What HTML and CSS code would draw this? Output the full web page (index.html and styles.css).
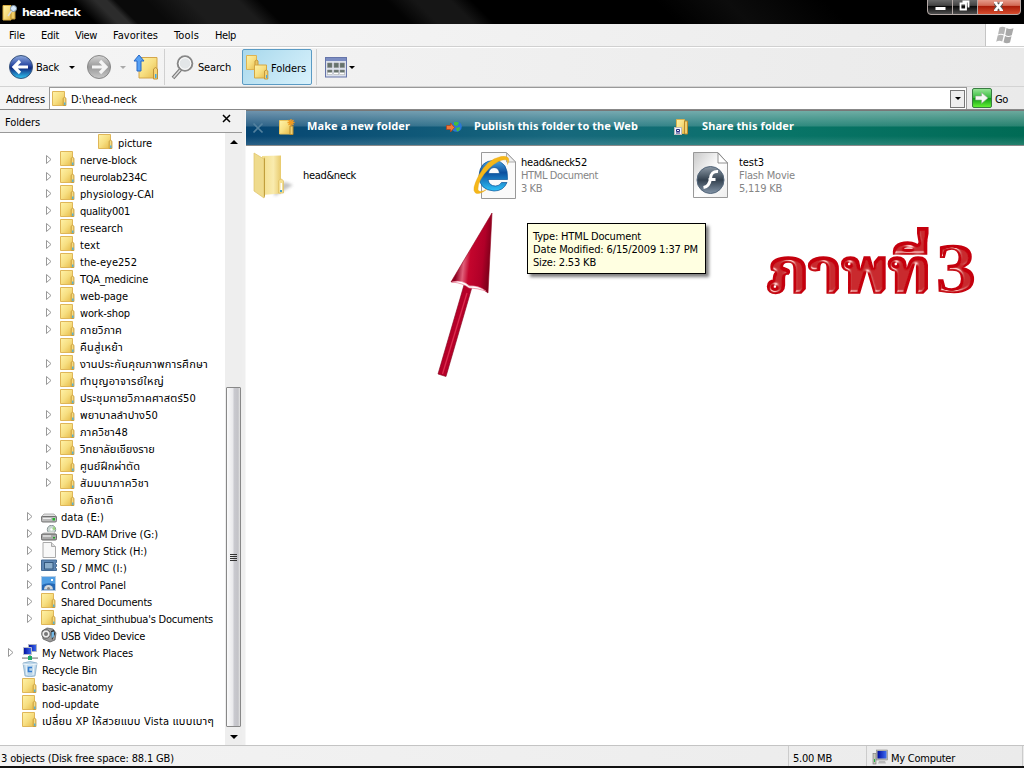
FILE: index.html
```html
<!DOCTYPE html>
<html lang="en">
<head>
<meta charset="utf-8">
<title>head-neck</title>
<link rel="stylesheet" href="styles.css">
</head>
<body>
<svg class="defs" aria-hidden="true">
  <defs>
    <linearGradient id="gFolder" x1="0" y1="0" x2="1" y2="1"><stop offset="0" stop-color="#fff3a8"/><stop offset=".5" stop-color="#f7df82"/><stop offset="1" stop-color="#e5b947"/></linearGradient>
    <linearGradient id="gBlue" x1="0" y1="0" x2="0" y2="1"><stop offset="0" stop-color="#8fabe0"/><stop offset=".45" stop-color="#24439f"/><stop offset=".55" stop-color="#102a80"/><stop offset="1" stop-color="#30c8f4"/></linearGradient>
    <linearGradient id="gGray" x1="0" y1="0" x2="0" y2="1"><stop offset="0" stop-color="#d5d5d5"/><stop offset=".5" stop-color="#999"/><stop offset="1" stop-color="#c9c9c9"/></linearGradient>
    <linearGradient id="gPage" x1="0" y1="0" x2="1" y2="1"><stop offset="0" stop-color="#c9c9c9"/><stop offset=".5" stop-color="#fff"/><stop offset="1" stop-color="#eee"/></linearGradient>
    <linearGradient id="gIe" x1="0" y1="0" x2="0" y2="1"><stop offset="0" stop-color="#4aa5e0"/><stop offset=".4" stop-color="#0c4f9e"/><stop offset="1" stop-color="#2fc4fa"/></linearGradient>
    <linearGradient id="gFlash" x1="0" y1="0" x2="0" y2="1"><stop offset="0" stop-color="#8d9aa6"/><stop offset=".5" stop-color="#33414f"/><stop offset="1" stop-color="#8395a8"/></linearGradient>
    <linearGradient id="gBig" x1="0" y1="0" x2="1" y2="0"><stop offset="0" stop-color="#f3de8c"/><stop offset=".6" stop-color="#f9ebae"/><stop offset="1" stop-color="#e8ca6c"/></linearGradient>
    <linearGradient id="gArrow" x1="0" y1=".3" x2="1" y2=".5"><stop offset=".2" stop-color="#8d0020"/><stop offset=".36" stop-color="#e0607a"/><stop offset=".5" stop-color="#c4052d"/><stop offset=".8" stop-color="#b00028"/><stop offset="1" stop-color="#760018"/></linearGradient>
    <linearGradient id="gScreen" x1="0" y1="0" x2="1" y2="0"><stop offset="0" stop-color="#000c9c"/><stop offset="1" stop-color="#3e6cf2"/></linearGradient>
  </defs>
  <symbol id="folder" viewBox="0 0 16 16"><path d="M.5.5h12v14H.5z" fill="url(#gFolder)" stroke="#dfb658"/><path d="M11.2 7.2q1.2-2 2.7 0v7.3h-2.7z" fill="#f5dc83" stroke="#c99d3b"/><path d="M12.2 11.500h1.2v2.500h-1.2z" fill="#35a8e5"/></symbol>
  <symbol id="drive" viewBox="0 0 16 16"><path d="M3 6h10l3 3H0z" fill="#e1e1e1" stroke="#999" stroke-width=".7"/><rect x=".4" y="8.5" width="15.2" height="5.5" rx="1.5" fill="#bbb" stroke="#666" stroke-width=".9"/><path d="M2 10.5h8" stroke="#eee"/><path d="M11.5 10h2.5v2.5h-2.5z" fill="#22b32b"/></symbol>
  <symbol id="dvd" viewBox="0 0 16 16"><circle cx="10.5" cy="4.5" r="4.2" fill="#c7d6d0" stroke="#8b9599"/><path d="M10.5 4.500l3-3.400 1 4z" fill="#9ad77d"/><circle cx="10.500" cy="4.500" r="1.200" fill="#fff"/><path d="M3 7h10l3 3H0z" fill="#ddd"/><rect x=".4" y="9" width="15.200" height="6" rx="1.300" fill="#aaa" stroke="#555" stroke-width=".9"/><path d="M2 11h8" stroke="#fff"/><path d="M12 12h2v1.500h-2z" fill="#22a32b"/></symbol>
  <symbol id="page" viewBox="0 0 16 16"><path d="M2 .5h8.500l4 4V15.500H2z" fill="#f8f8f8" stroke="#aaa"/><path d="M10.500.5v4h4" fill="#ddd" stroke="#aaa"/></symbol>
  <symbol id="card" viewBox="0 0 16 16"><path d="M.5 1h15v2.500h-1v2h1v2h-1v2h1v2H.5z" fill="#5d86b4" stroke="#456a94"/><rect x="3.500" y="3.500" width="8.500" height="6.500" fill="#8badcb" stroke="#34587f"/></symbol>
  <symbol id="panel" viewBox="0 0 16 16"><rect x=".5" y=".5" width="14" height="14" fill="#4f9ee4" stroke="#b4cbe4"/><path d="M1 9q5-3 13-1v6H1z" fill="#2568b5"/><path d="M3 13.500a4.500 4.500 0 0 1 9 0z" fill="#d5d9dc"/><circle cx="7.500" cy="12.500" r="1.500" fill="#888"/><path d="M10 3h2v2h-2z" fill="#fff"/></symbol>
  <symbol id="cam" viewBox="0 0 16 16"><path d="M1 4l5-3 6 1 3 4-1 7-5 2-7-3z" fill="#999" stroke="#555" stroke-width=".7"/><circle cx="5" cy="7" r="4.200" fill="#eee" stroke="#555"/><circle cx="5" cy="7" r="2" fill="#777"/><path d="M10 4l3-1 1 4-3 6z" fill="#222"/><path d="M10.500 5l2.500-.6v5l-2.500 2z" fill="#72b7e5"/></symbol>
  <symbol id="pc" viewBox="0 0 16 16"><rect x="1" y="4.500" width="3" height="10.500" fill="#c7c7b9" stroke="#777" stroke-width=".6"/><path d="M2 10h1v3H2z" fill="#2b4"/><rect x="4.500" y="1" width="11" height="10" fill="#bcbcb6" stroke="#777" stroke-width=".5"/><path d="M5.500 2h9v7.500h-9z" fill="url(#gScreen)"/><path d="M7 12h6l1 2.500H6z" fill="#bbb"/></symbol>
  <symbol id="net" viewBox="0 0 16 16"><path d="M6.500.5h8v7h-8z" fill="url(#gScreen)" stroke="#adb3be"/><path d="M1.500 3.500h8v7h-8z" fill="url(#gScreen)" stroke="#b9bfcc"/><path d="M8 11v2M0 14.200h16" stroke="#aaa" stroke-width="1.800"/><path d="M6 12h4v4H6z" fill="#20ac68"/></symbol>
  <symbol id="bin" viewBox="0 0 16 16"><path d="M1 2q7-3 14 0l-2 13q-5 1.500-10 0z" fill="#bdd7ea" stroke="#7da2c0" stroke-width=".7"/><path d="M1 3q7 2 14 0M4 4l1 10M12 4l-1 10" fill="none" stroke="#eef6fb"/><path d="M10 6.500H6.500v4H10" fill="none" stroke="#347cd0" stroke-width="1.600"/></symbol>
</svg>

<div class="window">
  <header class="titlebar">
    <svg class="title-icon" viewBox="0 0 17 17"><path d="M1 1.500h8V16H1z" fill="url(#gFolder)" stroke="#d8ac40"/><path d="M9 4.500h4V15H9z" fill="#eecb65" stroke="#bf9230"/><circle cx="11.500" cy="4.500" r="3" fill="#d6ebff" stroke="#8299ad"/><path d="M9.500 7L6 12" stroke="#ddd" stroke-width="1.500"/></svg>
    <span class="title" data-w="58">head-neck</span>
    <div class="controls">
      <svg width="96" height="16" viewBox="0 0 96 16">
        <defs><linearGradient id="gBtn" x1="0" y1="0" x2="0" y2="1"><stop offset="0" stop-color="#777"/><stop offset=".45" stop-color="#444"/><stop offset=".5" stop-color="#080808"/><stop offset="1" stop-color="#555"/></linearGradient><linearGradient id="gClose" x1="0" y1="0" x2="0" y2="1"><stop offset="0" stop-color="#ecac9d"/><stop offset=".45" stop-color="#d26a55"/><stop offset=".5" stop-color="#a91c08"/><stop offset="1" stop-color="#d95030"/></linearGradient></defs>
        <path d="M1.500-2V11q0 3.500 3.500 3.500H51V-2z" fill="url(#gBtn)"/><path d="M51-2V14.500H91q3.500 0 3.500-3.500V-2z" fill="url(#gClose)"/>
        <path d="M1.500-2V11q0 3.500 3.500 3.500H91q3.500 0 3.500-3.500V-2M26.500 0V14M51.500 0V14" fill="none" stroke="#b5aaa7"/>
        <rect x="9.500" y="7" width="10" height="3" fill="#fff"/>
        <path d="M36.500 1.500h6v6M34.500 3.500h5.500v6h-5.500z" fill="none" stroke="#fff" stroke-width="1.800"/>
        <path d="M69.500 3l6 7M75.500 3l-6 7" stroke="#555" stroke-width="4.500"/><path d="M69.500 3l6 7M75.500 3l-6 7" stroke="#fff" stroke-width="2.600"/><path d="M68 2.500h3.500M73.500 2.500H77M68 10.300h3.500M73.500 10.300H77" stroke="#fff" stroke-width="1.500"/>
      </svg>
    </div>
  </header>

  <nav class="menubar">
    <span data-w="16">File</span><span data-w="18">Edit</span><span data-w="22">View</span><span data-w="45">Favorites</span><span data-w="25">Tools</span><span data-w="21">Help</span>
    <div class="flag"><svg width="22" height="20" viewBox="0 0 22 20"><g fill="#b5b5b5"><path d="M4.500 2.500q3-1.600 6 0L9 9.500q-3-1.500-6 0zM2.700 10.500q3-1.500 6 0l-1.500 6q-3-1.500-6 .3z"/><path d="M11.500 3q3 1.800 7 .2l-1.700 7q-3.500 1.500-6.500-.2zM10 11q3 1.700 6.500.2l-1.500 6.300q-3.500 1.500-6.500-.2z" fill="#a8a8a8"/></g></svg></div>
  </nav>

  <div class="toolbar">
    <div class="tool back">
      <svg width="26" height="26" viewBox="0 0 26 26"><circle cx="13" cy="13" r="11.500" fill="url(#gBlue)" stroke="#39547c"/><path d="M12 7l-6 6 6 6M7 13h13" fill="none" stroke="#fff" stroke-width="3.200"/></svg>
      <span data-w="23">Back</span><i class="caret"></i>
    </div>
    <div class="tool fwd"><svg width="26" height="26" viewBox="0 0 26 26"><circle cx="13" cy="13" r="11.500" fill="url(#gGray)" stroke="#888"/><path d="M14 7l6 6-6 6M19 13H6" fill="none" stroke="#f5f5f5" stroke-width="3.200"/></svg><i class="caret dim"></i></div>
    <div class="tool up"><svg width="26" height="26" viewBox="0 0 26 26"><path d="M6 3.500h18V24H6z" fill="url(#gFolder)" stroke="#d4a64b"/><path d="M20.500 15q2-3 4 0v10h-4z" fill="#f5d477" stroke="#bd923a"/><path d="M22 20h1.500v4H22z" fill="#45a9e4"/><path d="M6 1l5 6H8v10H4V7H1z" fill="#57a1f4" stroke="#2768c7"/></svg></div>
    <div class="tool search"><svg width="24" height="26" viewBox="0 0 24 26"><path d="M10 15L2 24" stroke="#777" stroke-width="3.600"/><path d="M9.500 15.500L2.500 23.500" stroke="#ddd" stroke-width="1.500"/><circle cx="14" cy="9.500" r="7.300" fill="#ededed" stroke="#888" stroke-width="2"/><circle cx="14" cy="9.500" r="5.800" fill="#e3e6e8" stroke="#fff"/></svg><span data-w="33">Search</span></div>
    <div class="tool pressed"><svg width="24" height="26" viewBox="0 0 24 26"><path d="M1.500 1.500h10v14h-10z" fill="url(#gFolder)" stroke="#ddb352"/><path d="M10 7q2-2 3 0v8h-3z" fill="#eac661" stroke="#c79a3c"/><path d="M9.500 11h12v13h-12z" fill="url(#gFolder)" stroke="#d4a743"/><path d="M19.500 17q2-2 3.300 0v8h-3.300z" fill="#f2d175" stroke="#c5993b"/><path d="M21 21h1.200v3H21z" fill="#45a9e4"/></svg><span data-w="35">Folders</span></div>
    <div class="tool views"><svg width="23" height="21" viewBox="0 0 23 21"><rect x=".5" y=".5" width="21" height="19.500" fill="#dce1ec" stroke="#6675aa"/><path d="M1 1h20v3H1z" fill="#7c8dc2"/><g fill="#65736d" stroke="#888" stroke-width=".5"><path d="M2.500 6h4.500v4.500H2.500zM9 6h4.500v4.500H9zM15 6h4.500v4.500H15zM2.500 13h4.500v4.500H2.500zM9 13h4.500v4.500H9zM15 13h4.500v4.500H15z"/></g><path d="M2.500 17.500h4.500v-2H2.500zM9 17.500h4.500v-2H9zM15 17.500h4.500v-2H15z" fill="#fff"/></svg><i class="caret"></i></div>
  </div>

  <div class="addressbar">
    <span class="addr-label" data-w="39">Address</span>
    <div class="addr-field"><svg class="ic"><use href="#folder"/></svg><span data-w="66">D:\head-neck</span><div class="drop"><i class="caret"></i></div></div>
    <svg class="go" width="20" height="20" viewBox="0 0 20 20"><defs><linearGradient id="gGo" x1="0" y1="0" x2="0" y2="1"><stop offset="0" stop-color="#9ce69c"/><stop offset=".48" stop-color="#35bd3b"/><stop offset=".52" stop-color="#109a17"/><stop offset="1" stop-color="#66f735"/></linearGradient></defs><rect x=".5" y=".5" width="19" height="19" rx="1.500" fill="url(#gGo)" stroke="#397c42"/><path d="M3.500 8h6V4.500L16 10l-6.500 5.500V12h-6z" fill="#f4f8f4" stroke="#8da38d" stroke-width=".6"/></svg>
    <span data-w="13">Go</span>
  </div>

  <main class="body">
    <aside class="sidebar">
      <div class="side-head"><span data-w="35">Folders</span><svg width="9" height="9" viewBox="0 0 9 9"><path d="M1 1l7 7M8 1L1 8" stroke="#000" stroke-width="1.500"/></svg></div>
      <div class="side-main">
        <div class="tree" id="tree"></div>
        <div class="scroll"><i class="tri up-tri"></i><div class="thumb"><i></i><i></i><i></i><i></i></div><i class="tri"></i></div>
      </div>
    </aside>
    <section class="content">
      <div class="tasks">
        <svg class="x" width="12" height="12" viewBox="0 0 12 12"><path d="M1.500 1.500l9 9M10.500 1.500l-9 9" stroke="#54829f" stroke-width="1.700"/></svg>
        <div class="task t1"><svg width="16" height="16" viewBox="0 0 16 16"><path d="M.5 1.500h11v13.500H.5z" fill="url(#gFolder)" stroke="#e8c35d"/><path d="M11 7h3v8.500h-3z" fill="#efd072" stroke="#b98b2b"/><path d="M12 0v7M8.500 3.500h7M9.500 1l5 5M14.500 1l-5 5" stroke="#f09a21" stroke-width="1.300"/></svg><span data-w="103">Make a new folder</span></div>
        <div class="task t2"><svg width="16" height="16" viewBox="0 0 16 16"><circle cx="10.500" cy="7.500" r="5.300" fill="#2877d6"/><path d="M8 3q4-1 5 1l-2 3-3-1zM10 9l4-1q0 4-3 4.500z" fill="#43bd3c"/><path d="M.5 6.500h4V4l4 4.500-4 4.500v-2.500h-4z" fill="#f27836" stroke="#b53e17" stroke-width=".7"/></svg><span data-w="164">Publish this folder to the Web</span></div>
        <div class="task t3"><svg width="16" height="16" viewBox="0 0 16 16"><path d="M2.500.5h8v14h-8z" fill="url(#gFolder)" stroke="#dbb14d"/><path d="M10.500 2h3v13h-3z" fill="#f0cf6f" stroke="#b88b2d"/><rect x=".5" y="8.500" width="7" height="7" fill="#f3f4ff" stroke="#bbb"/><path d="M2.500 10.500h3v2h-3zM2 14h4" stroke="#23287d" fill="none"/></svg><span data-w="92">Share this folder</span></div>
      </div>
      <div class="files">
        <div class="file f1"><svg width="42" height="48" viewBox="0 0 42 48"><defs><filter id="soft"><feGaussianBlur stdDeviation="1.500"/></filter></defs><path d="M22 44l18-11-8-3-12 8z" fill="#aaa" opacity=".7" filter="url(#soft)"/><path d="M9 4l19-.5v38L9 43z" fill="url(#gBig)"/><path d="M1 1l10 6v39L1 39z" fill="#efdb8d" stroke="#dfc367" stroke-width=".7"/><path d="M11 7l1-2v39l-1 2z" fill="#c19f3d"/><path d="M25.500 41V29q2.500-4 5 0v12z" fill="#f4df91" stroke="#dcbd60" stroke-width=".7"/><path d="M27.500 31h1.500v7h-1.500z" fill="#fff"/><path d="M27 38h2v2h-2z" fill="#469ecb"/></svg><span data-w="53">head&amp;neck</span></div>
        <div class="file f2"><svg width="46" height="48" viewBox="0 0 46 48"><path d="M8.500.5h25L42.500 10v36.500h-34z" fill="#fafafa" stroke="#999"/><path d="M33.500 1v9h9z" fill="#eee" stroke="#999" stroke-width=".8"/><path d="M34.500 27.500H15q1 6.500 7.500 6.500 4 0 6-3.500h5.500Q30.500 39 21 39 6 38 6 23.500 7 8.500 21 8.500q14.500.5 13.500 19zM15.500 21.500h11q-.5-6-5.500-6-5 .5-5.500 6z" fill="url(#gIe)" stroke="#0a5297" stroke-width=".7" fill-rule="evenodd"/><path d="M6 23Q-2 38 2.500 41q4 2 11-3.500-7 3.500-8.500.5Q4 29 16 16.500 27 6 34 8q1 1 .5 4.500Q39 3 28 4.500 14 7.500 6 23z" fill="#f5b719" stroke="#e7a513" stroke-width=".4"/></svg><div class="meta"><span data-w="66">head&amp;neck52</span><span class="dim-text" data-w="77">HTML Document</span><span class="dim-text" data-w="21">3 KB</span></div></div>
        <div class="file f3"><svg width="36" height="47" viewBox="0 0 36 47"><path d="M.5.500h24.500L34.500 11v34.500H.5z" fill="url(#gPage)" stroke="#999"/><path d="M25 1v10h9.500z" fill="#fff" stroke="#777" stroke-width=".8"/><circle cx="17.500" cy="28" r="13.500" fill="url(#gFlash)" stroke="#526579"/><path d="M25 19.500q-7-.5-7.500 7-1 8-7 9M15.500 27.500h7" fill="none" stroke="#fff" stroke-width="3"/></svg><div class="meta"><span data-w="25">test3</span><span class="dim-text" data-w="56">Flash Movie</span><span class="dim-text" data-w="43">5,119 KB</span></div></div>
      </div>
      <svg class="arrow" width="60" height="170" viewBox="0 0 60 170"><path d="M27 74L35 76 9 165.500 1 163z" fill="#b50028" stroke="#82001b" stroke-width=".6"/><path d="M30 82L5.500 163" stroke="#dc2c4f" stroke-width="1.300"/><path d="M55 2L51 82Q43 75 34 75 24 69 14 71z" fill="url(#gArrow)" stroke="#92001c" stroke-width=".6"/><path d="M15 71q11-3 17 4 9-1 17 5-9-3-17-3-6-5-17-6z" fill="#fff" stroke="#e2607c" stroke-width=".6"/></svg>
      <svg class="caption" width="260" height="150" viewBox="0 -30 260 150"><defs><filter id="bevel" x="-10%" y="-10%" width="120%" height="120%"><feGaussianBlur in="SourceAlpha" stdDeviation="1.700" result="b"/><feSpecularLighting in="b" surfaceScale="4" specularConstant=".9" specularExponent="28" lighting-color="#fff" result="s"><feDistantLight azimuth="110" elevation="36"/></feSpecularLighting><feComposite in="s" in2="SourceAlpha" operator="in" result="s2"/><feComposite in="SourceGraphic" in2="s2" operator="arithmetic" k2="1" k3=".7"/></filter></defs><g filter="url(#bevel)"><text class="cap-th" x="6" y="77" textLength="164" lengthAdjust="spacingAndGlyphs">ภาพที่</text><text class="cap-num" x="175" y="77" textLength="40" lengthAdjust="spacingAndGlyphs">3</text></g></svg>
      <div class="tip"><span data-w="108">Type: HTML Document</span><span data-w="165">Date Modified: 6/15/2009 1:37 PM</span><span data-w="63">Size: 2.53 KB</span></div>
    </section>
  </main>

  <footer class="status"><div class="s1"><span data-w="173">3 objects (Disk free space: 88.1 GB)</span></div><div class="s2"><span data-w="39">5.00 MB</span></div><div class="s3"><svg class="ic"><use href="#pc"/></svg><span data-w="64">My Computer</span></div></footer>
</div>
<script src="tree.js"></script>
</body>
</html>
```
FILE: styles.css
```css
* { box-sizing: border-box; }
body { margin: 0; width: 1024px; height: 768px; overflow: hidden; font: 11px/13px "DejaVu Sans Condensed", "DejaVu Sans", "Noto Sans Thai", sans-serif; color: #000; background: #fff; }
span { white-space: nowrap; flex: none; }
svg { display: block; flex: none; }
.defs { position: absolute; width: 0; height: 0; }
.window { display: flex; flex-direction: column; width: 1024px; height: 768px; }
.titlebar { height: 24px; flex: none; display: flex; align-items: center; padding: 0 2px; background: linear-gradient(45deg, #000 0 68px, #2c2c2c 84px 92px, #0a0a0a 98px 120px, #1c1c1c 150px 185px, #030303 200px 290px, #161616 310px 335px, #000 350px 480px, #0c0c0c 530px, #000 600px); color: #fff; }
.title-icon { width: 17px; height: 17px; }
.title { margin-left: 3px; font: bold 11px/13px "DejaVu Sans", sans-serif; }
.controls { margin-left: auto; align-self: flex-start; }
.menubar { height: 23px; flex: none; display: flex; align-items: center; gap: 16px; padding-left: 9px; background: linear-gradient(90deg, #f7f7f7, #ebebeb); border-bottom: 1px solid #d0d0d0; }
.flag { margin-left: auto; width: 39px; height: 22px; background: #fff; border-left: 1px solid #c5c5c5; padding: 1px 0 0 9px; }
.toolbar { height: 40px; flex: none; display: flex; align-items: center; border-top: 1px solid #fff; border-bottom: 1px solid #d3d3d3; background: linear-gradient(90deg, #f5f5f5, #eaeaea); }
.tool { display: flex; align-items: center; height: 36px; }
.caret { display: block; width: 0; height: 0; border: 3px solid transparent; border-top-color: #000; border-bottom: 0; }
.dim { border-top-color: #aaa; }
.back { padding-left: 8px; width: 85px; }
.back span { margin: 0 10px 0 2px; }
.fwd { width: 48px; padding-left: 1px; }
.fwd .caret { margin-left: 8px; }
.up { width: 32px; border-right: 1px solid #d0d0d0; }
.search { width: 77px; padding-left: 6px; }
.search span { margin-left: 3px; }
.pressed { width: 70px; border: 1px solid #5b9bc4; border-radius: 2px; padding-left: 2px; background: linear-gradient(135deg, #a8d8ec, #d9f2fc); }
.pressed span { margin: 2px 0 0 2px; }
.views { margin-left: 4px; padding-left: 8px; border-left: 1px solid #d0d0d0; }
.views .caret { margin-left: 1px; }
.addressbar { height: 23px; flex: none; display: flex; align-items: center; padding-left: 6px; border-bottom: 1px solid #888; background: linear-gradient(90deg, #f5f5f5, #eaeaea); }
.addressbar span { padding-top: 2px; }
.addr-label { width: 43px; }
.addr-field { width: 918px; height: 22px; display: flex; align-items: center; background: #fff; border: 1px solid #999; border-width: 1px 1px 0; padding-left: 2px; }
.ic { width: 16px; height: 16px; }
.addr-field > span { margin-left: 3px; }
.drop { margin: 0 1px 0 auto; width: 15px; height: 18px; border: 1px solid #777; background: #eee; display: flex; align-items: center; justify-content: center; }
.go { margin: 0 3px 0 5px; }
.body { display: flex; height: 635px; flex: none; }
.sidebar { width: 246px; flex: none; background: #efefef; display: flex; flex-direction: column; border-right: 1px solid #f7f7f7; }
.side-head { width: 242px; height: 23px; flex: none; display: flex; align-items: center; justify-content: space-between; padding: 3px 11px 0 5px; border-bottom: 1px solid #999; background: #f1f1f1; }
.side-head svg { margin-top: -8px; }
.side-main { display: flex; flex: 1; min-height: 0; }
.tree { width: 225px; background: #fff; padding-top: 1px; }
.row { display: flex; align-items: center; height: 17px; }
.row .exp { width: 14px; height: 16px; flex: none; }
.row .ic { margin-top: -1px; }
.row span { margin-left: 4px; padding-top: 2px; }
.lv0 { padding-left: 8px; }
.lv1 { padding-left: 27px; }
.lv2 { padding-left: 46px; }
.lv3 { padding-left: 84px; }
.scroll { width: 17px; display: flex; flex-direction: column; align-items: center; padding: 7px 0 6px; background: #eee; }
.tri { width: 0; height: 0; border: 4px solid transparent; border-top-color: #000; border-bottom: 0; }
.up-tri { border-top: 0; border-bottom: 4px solid #000; margin-bottom: 243px; }
.thumb { width: 15px; height: 340px; margin-bottom: 8px; border: 1px solid #888; border-radius: 1px; background: linear-gradient(90deg, #fafafa, #e9e9ec 45%, #c9c9cf 55%, #c3c3c8 85%, #e5e5e5); display: flex; flex-direction: column; align-items: center; justify-content: center; gap: 1px; }
.thumb i { width: 7px; height: 1px; background: #333; }
.content { flex: 1; position: relative; background: #fff; min-width: 0; }
.tasks { height: 36px; display: flex; align-items: center; color: #fff; font: bold 11px/14px "Noto Sans", "Open Sans", sans-serif; border-top: 1px solid #777; border-bottom: 1px solid #8a8a8a; background: linear-gradient(180deg, rgba(255,255,255,.42), rgba(255,255,255,.16) 15px, transparent 16px, transparent 25px, rgba(255,255,255,.14)), linear-gradient(90deg, #064572, #17687d 40%, #087467 70%, #006b55); padding-bottom: 3px; }
.x { margin: 3px 0 0 6px; }
.task { display: flex; align-items: center; }
.t1 { margin-left: 15px; width: 167px; }
.t2 { width: 228px; }
.task span { margin: -2px 0 0 12px; }
.files { display: flex; padding-top: 6px; }
.file { display: flex; }
.f1 { width: 227px; padding-left: 7px; align-items: center; height: 48px; }
.f1 span { margin: -2px 0 0 8px; }
.f2 { width: 220px; }
.f2 .meta { margin-left: 2px; }
.f3 .meta { margin-left: 10px; }
.meta { display: flex; flex-direction: column; align-items: flex-start; padding-top: 4px; }
.dim-text { color: #858585; }
.arrow { position: absolute; left: 191px; top: 101px; }
.caption { position: absolute; left: 515px; top: 75px; }
.cap-th { font: bold 60px "Norasi", "Kinnari", "Noto Serif Thai", "Noto Sans Thai", serif; fill: #c5000d; stroke: #c5000d; stroke-width: 3.5px; }
.cap-num { font: bold 70px "Liberation Serif", serif; fill: #c5000d; stroke: #c5000d; stroke-width: 1.500px; }
.tip { position: absolute; left: 281px; top: 113px; width: 179px; height: 51px; display: flex; flex-direction: column; align-items: flex-start; padding: 6px 5px; background: #ffffe1; border: 1px solid #000; box-shadow: 3px 3px 3px rgba(0,0,0,.5); }
.status { flex: 1; display: flex; border-top: 1px solid #c4c4c4; border-bottom: 2px solid #111; background: linear-gradient(90deg, #f3f3f3, #ebebeb); }
.status > div { display: flex; align-items: center; padding-top: 4px; }
.status .ic { margin-top: -2px; }
.s1 { width: 788px; padding-left: 1px; }
.s2 { width: 78px; padding-left: 4px; border-left: 1px solid #ccc; }
.s3 { width: 157px; padding-left: 5px; border-left: 1px solid #ccc; border-right: 1px solid #ccc; }
.s3 span { margin-left: 3px; }
```
FILE: tree.js
```js
// level, icon, has children, label, label width
const rows = [
  [3, 'folder', 0, 'picture', 34],
  [2, 'folder', 1, 'nerve-block', 57],
  [2, 'folder', 1, 'neurolab234C', 67],
  [2, 'folder', 1, 'physiology-CAI', 74],
  [2, 'folder', 1, 'quality001', 50],
  [2, 'folder', 1, 'research', 43],
  [2, 'folder', 1, 'text', 20],
  [2, 'folder', 1, 'the-eye252', 57],
  [2, 'folder', 1, 'TQA_medicine', 68],
  [2, 'folder', 1, 'web-page', 48],
  [2, 'folder', 1, 'work-shop', 50],
  [2, 'folder', 1, 'กายวิภาค', 42],
  [2, 'folder', 0, 'คืนสู่เหย้า', 43],
  [2, 'folder', 1, 'งานประกันคุณภาพการศึกษา', 128],
  [2, 'folder', 1, 'ทำบุญอาจารย์ใหญ่', 84],
  [2, 'folder', 0, 'ประชุมกายวิภาคศาสตร์50', 116],
  [2, 'folder', 1, 'พยาบาลลำปาง50', 78],
  [2, 'folder', 1, 'ภาควิชา48', 48],
  [2, 'folder', 1, 'วิทยาลัยเชียงราย', 75],
  [2, 'folder', 1, 'ศูนย์ฝึกผ่าตัด', 60],
  [2, 'folder', 1, 'สัมมนาภาควิชา', 69],
  [2, 'folder', 0, 'อภิชาติ', 34],
  [1, 'drive', 1, 'data (E:)', 43],
  [1, 'dvd', 1, 'DVD-RAM Drive (G:)', 97],
  [1, 'page', 1, 'Memory Stick (H:)', 86],
  [1, 'card', 1, 'SD / MMC (I:)', 66],
  [1, 'panel', 1, 'Control Panel', 65],
  [1, 'folder', 1, 'Shared Documents', 91],
  [1, 'folder', 1, "apichat_sinthubua's Documents", 152],
  [1, 'cam', 0, 'USB Video Device', 84],
  [0, 'net', 1, 'My Network Places', 91],
  [0, 'bin', 0, 'Recycle Bin', 55],
  [0, 'folder', 0, 'basic-anatomy', 71],
  [0, 'folder', 0, 'nod-update', 57],
  [0, 'folder', 0, 'เปลี่ยน XP ให้สวยแบบ Vista แบบเบาๆ', 172]
];
const tri = '<path d="M.5 3.500v8l4.500-4z" fill="#fff" stroke="#999"/>';
document.getElementById('tree').innerHTML = rows.map(([lv, icon, kids, text, w]) =>
  `<div class="row lv${lv}"><svg class="exp" viewBox="0 0 14 16">${kids ? tri : ''}</svg>` +
  `<svg class="ic"><use href="#${icon}"/></svg>` +
  `<span data-w="${w}">${text}</span></div>`).join('');

// Track each label so that it occupies its declared width.
document.querySelectorAll('[data-w]').forEach(el => {
  const width = () => { const r = document.createRange(); r.selectNodeContents(el); return r.getBoundingClientRect().width; };
  el.style.letterSpacing = '0px';
  const w0 = width();
  el.style.letterSpacing = '1px';
  const w1 = width();
  el.style.letterSpacing = ((el.dataset.w - w0) / (w1 - w0)).toFixed(3) + 'px';
});
```
